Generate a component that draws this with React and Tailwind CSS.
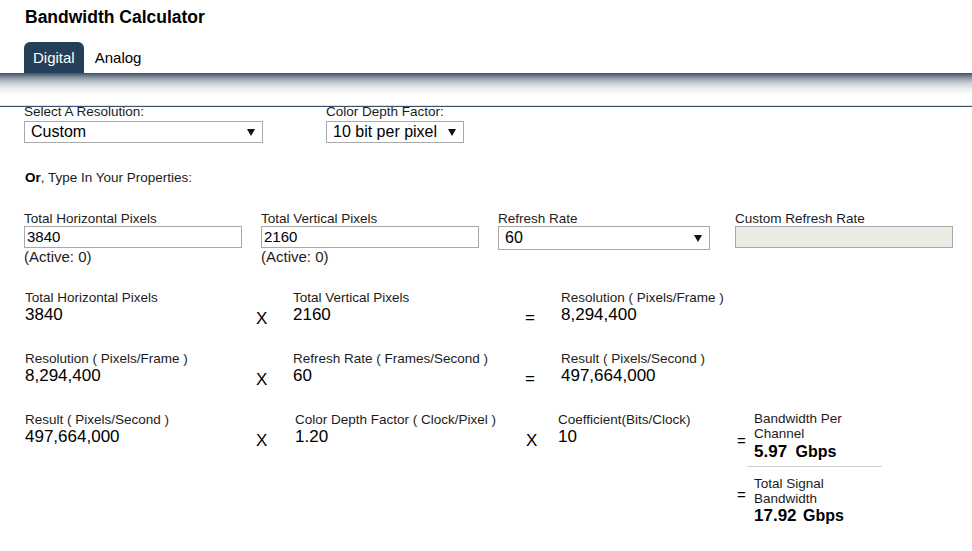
function Arrow() {
  return (
    <svg width="8" height="7" viewBox="0 0 8 7" className="shrink-0">
      <polygon points="0,0 8,0 4,7" fill="#111" />
    </svg>
  );
}

function FakeSelect({ value, className }) {
  return (
    <div
      className={
        "flex items-center justify-between border border-[#a9a9a9] bg-white pl-[6px] pr-[7px] text-[16px] leading-[20px] text-black " +
        className
      }
    >
      <span>{value}</span>
      <Arrow />
    </div>
  );
}

function Cell({ label, value, className }) {
  return (
    <div className={className}>
      <div className="text-[13.5px] leading-[14px] whitespace-nowrap">{label}</div>
      <div className="text-[17px] leading-[20px] text-black">{value}</div>
    </div>
  );
}

function Op({ children, className }) {
  return (
    <div className={"text-[17px] leading-[20px] text-black " + className}>{children}</div>
  );
}

export default function App() {
  return (
    <div className="w-[972px] min-h-[551px] bg-white font-['Liberation_Sans',Arial,sans-serif] text-[#1c1c1c]">
      <div className="pl-[25px] pt-[5px] text-[17.5px] font-bold leading-[25px] text-black">
        Bandwidth Calculator
      </div>

      <div className="mt-[12px] flex h-[31px] pl-[24px]">
        <div className="rounded-t-[6px] bg-[#243f57] px-[9px] text-[15px] leading-[31px] text-white">
          Digital
        </div>
        <div className="ml-[2px] px-[9px] text-[15px] leading-[31px] text-black">Analog</div>
      </div>

      <div className="h-[32px] bg-[linear-gradient(to_bottom,#3b5064_0px,#8f9aa5_5px,#c9ced3_10px,#eceef0_16px,#ffffff_22px)]" />
      <div className="h-px bg-[#dde1e5]" />
      <div className="h-px bg-[#3c5268]" />

      <div className="mt-[-2px] flex pl-[24px]">
        <div className="w-[302px]">
          <div className="text-[13.5px] leading-[14px]">Select A Resolution:</div>
          <FakeSelect value="Custom" className="mt-[2px] h-[22px] w-[239px]" />
        </div>
        <div>
          <div className="text-[13.5px] leading-[14px]">Color Depth Factor:</div>
          <FakeSelect value="10 bit per pixel" className="mt-[2px] h-[22px] w-[138px]" />
        </div>
      </div>

      <div className="mt-[28px] pl-[25px] text-[13.5px] leading-[14px]">
        <span className="font-bold text-black">Or</span>, Type In Your Properties:
      </div>

      <div className="mt-[27px] flex pl-[24px]">
        <div className="w-[237px]">
          <div className="text-[13.5px] leading-[14px]">Total Horizontal Pixels</div>
          <div className="flex h-[22px] w-[218px] items-center border border-[#a9a9a9] pl-[2px] text-[15px] text-black">
            3840
          </div>
          <div className="text-[15px] leading-[17px]">(Active: 0)</div>
        </div>
        <div className="w-[237px]">
          <div className="text-[13.5px] leading-[14px]">Total Vertical Pixels</div>
          <div className="flex h-[22px] w-[218px] items-center border border-[#a9a9a9] pl-[2px] text-[15px] text-black">
            2160
          </div>
          <div className="text-[15px] leading-[17px]">(Active: 0)</div>
        </div>
        <div className="w-[237px]">
          <div className="text-[13.5px] leading-[14px]">Refresh Rate</div>
          <FakeSelect value="60" className="h-[24px] w-[212px]" />
        </div>
        <div className="w-[237px]">
          <div className="text-[13.5px] leading-[14px]">Custom Refresh Rate</div>
          <div className="h-[22px] w-[218px] border border-[#a9a9a9] bg-[#ebebe4]" />
        </div>
      </div>

      <div className="mt-[26px] flex h-[61px] pl-[25px]">
        <Cell className="w-[231px]" label="Total Horizontal Pixels" value="3840" />
        <Op className="w-[37px] pt-[18px]">X</Op>
        <Cell className="w-[232px]" label="Total Vertical Pixels" value="2160" />
        <Op className="w-[36px] pt-[17px]">=</Op>
        <Cell label="Resolution ( Pixels/Frame )" value="8,294,400" />
      </div>

      <div className="flex h-[61px] pl-[25px]">
        <Cell className="w-[231px]" label="Resolution ( Pixels/Frame )" value="8,294,400" />
        <Op className="w-[37px] pt-[18px]">X</Op>
        <Cell className="w-[232px]" label="Refresh Rate ( Frames/Second )" value="60" />
        <Op className="w-[36px] pt-[17px]">=</Op>
        <Cell label="Result ( Pixels/Second )" value="497,664,000" />
      </div>

      <div className="flex pl-[25px]">
        <Cell className="w-[231px]" label="Result ( Pixels/Second )" value="497,664,000" />
        <Op className="w-[39px] pt-[18px]">X</Op>
        <Cell className="w-[231px]" label="Color Depth Factor ( Clock/Pixel )" value="1.20" />
        <Op className="w-[32px] pt-[18px]">X</Op>
        <Cell className="w-[179px]" label="Coefficient(Bits/Clock)" value="10" />
        <div className="mt-[-2px] w-[150px]">
          <div className="flex">
            <div className="w-[17px] pt-[22px] text-[15px] leading-[15px] text-black">=</div>
            <div className="w-[110px]">
              <div className="text-[13.5px] leading-[15px]">Bandwidth Per Channel</div>
              <div className="flex items-baseline font-bold leading-[22px] text-black">
                <span className="text-[17px]">5.97</span>
                <span className="ml-[8.5px] text-[16px]">Gbps</span>
              </div>
            </div>
          </div>
          <div className="ml-[10px] mt-[2.5px] h-px w-[135px] bg-[#d0d0d0]" />
          <div className="mt-[9px] flex">
            <div className="w-[17px] pt-[11px] text-[15px] leading-[15px] text-black">=</div>
            <div className="w-[110px]">
              <div className="text-[13.5px] leading-[15px]">Total Signal Bandwidth</div>
              <div className="mt-[-1px] flex items-baseline font-bold leading-[22px] text-black">
                <span className="text-[17px]">17.92</span>
                <span className="ml-[6.5px] text-[16px]">Gbps</span>
              </div>
            </div>
          </div>
        </div>
      </div>
    </div>
  );
}
